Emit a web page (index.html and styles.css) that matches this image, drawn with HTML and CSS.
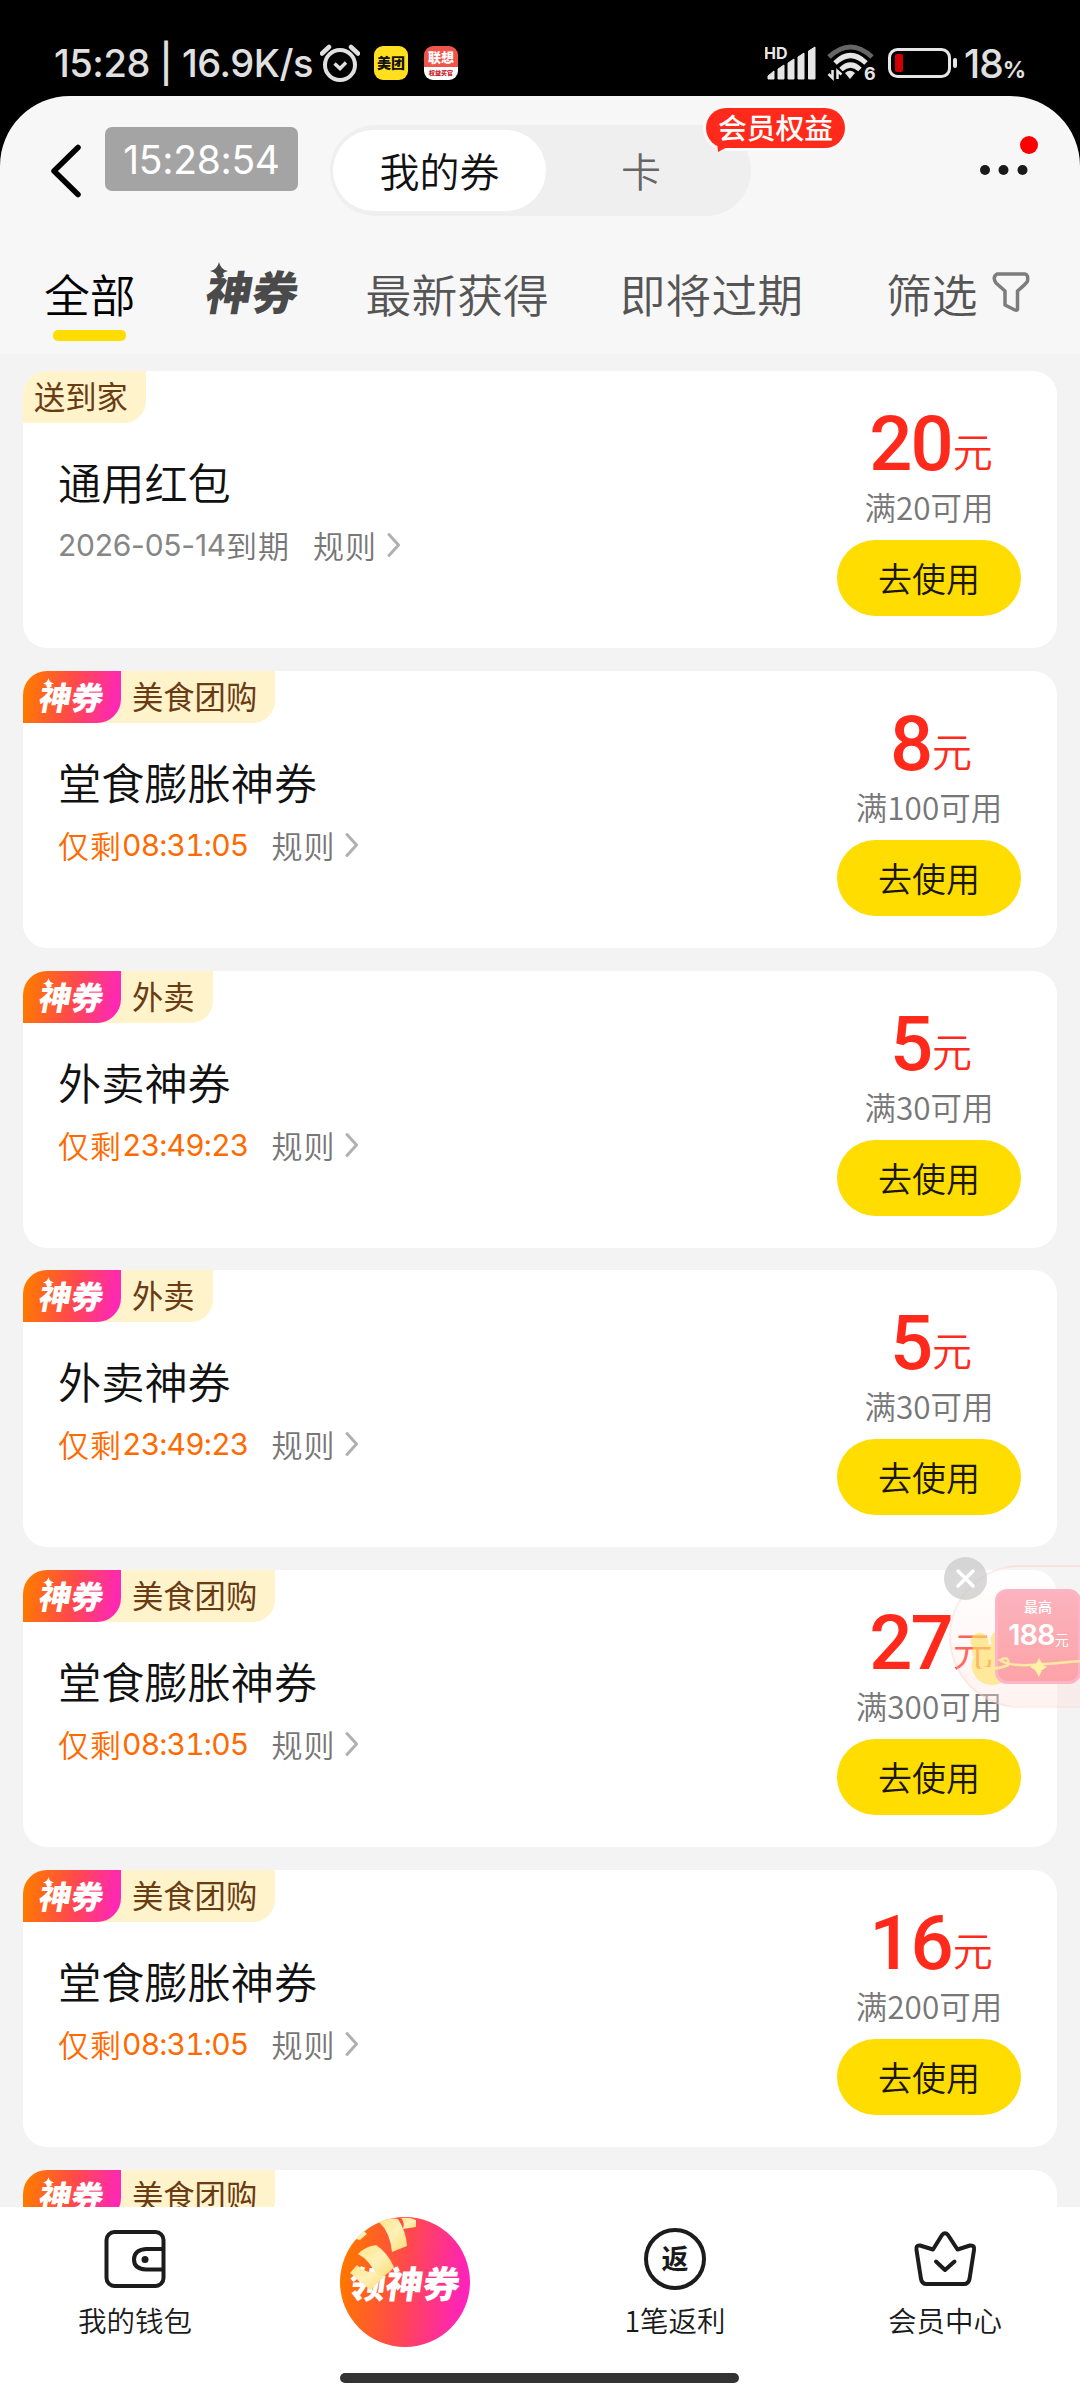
FILE: index.html
```html
<!DOCTYPE html>
<html lang="zh-CN">
<head>
<meta charset="utf-8">
<title>我的券</title>
<link rel="stylesheet" href="styles.css">
</head>
<body>
<svg width="0" height="0" class="defs">
  <symbol id="chev" viewBox="0 0 14 26"><path d="M2 2.500 L11.500 13 L2 23.500" fill="none" stroke="#b0b0b0" stroke-width="3" stroke-linecap="round" stroke-linejoin="round"/></symbol>
  <symbol id="spark" viewBox="0 0 18 18"><path d="M9 0 Q10.500 7.500 18 9 Q10.500 10.500 9 18 Q7.500 10.500 0 9 Q7.500 7.500 9 0Z" fill="currentColor"/></symbol>
</svg>
<div class="phone">
  <div class="status">
    <span class="clock">15:28 | 16.9K/s</span>
    <svg class="alarm" width="40" height="38" viewBox="0 0 40 38" fill="none" stroke="#e0e0e0"><circle cx="20" cy="21" r="15" stroke-width="4"/><path d="M14.500 19.500 L20 24.500 L26 18.500" stroke-width="3.500"/><path d="M2 9.500 L9 3 M38 9.500 L31 3" stroke-width="4.500" stroke-linecap="round"/></svg>
    <span class="app app-mt">美团</span>
    <span class="app app-lx"><b>联想</b><i>权益买官</i></span>
    <svg class="signal" width="52" height="36" viewBox="0 0 52 36" fill="#e6e6e6"><text x="-1" y="14" class="hd">HD</text><path d="M3 34 V31 L9 26 V34Z M13 34 V24 L19 20 V34Z M23 34 V18 L29 14 V34Z M33 34 V12 L39 8 V34Z M43.500 34 V6 L50 2 V34Z" stroke="#e6e6e6" stroke-width="1" stroke-linejoin="round"/></svg>
    <svg class="wifi" width="50" height="40" viewBox="0 0 50 40" fill="none" stroke="#e6e6e6" stroke-width="5"><path d="M2 14 Q23.500 -6 45 14" stroke="#666"/><path d="M8 20 Q23.500 5 39 20"/><path d="M14 26.500 Q23.500 17.500 33 26.500"/><path d="M18 30 Q23 25.500 28 30 L23 36Z" fill="#e6e6e6" stroke="none"/><path d="M5.500 27 V35 L1.500 31 M10.500 36 V28 L14.500 31.500" stroke-width="2.500"/><text x="37" y="37" class="six" stroke="none" fill="#e6e6e6">6</text></svg>
    <svg class="battery" width="70" height="32" viewBox="0 0 70 32"><rect x="1.500" y="2.500" width="60" height="27" rx="8" fill="none" stroke="#e6e6e6" stroke-width="3"/><rect x="7" y="7" width="8" height="18" rx="2" fill="#d00000"/><rect x="65" y="11" width="4" height="10" rx="2" fill="#e6e6e6"/></svg>
    <span class="pct">18<small>%</small></span>
  </div>

  <div class="sheet">
    <header class="top">
      <svg class="back" width="32" height="54" viewBox="0 0 32 54"><path d="M28 3.500 L4 27 L28 50.500" fill="none" stroke="#000" stroke-width="5.500" stroke-linecap="round" stroke-linejoin="round"/></svg>
      <div class="timer">15:28:54</div>
      <div class="seg">
        <div class="seg-on">我的券</div>
        <div class="seg-off">卡</div>
        <div class="badge">会员权益<svg class="tail" width="16" height="12" viewBox="0 0 16 12"><path d="M1 0 L2 11 L15 4 V0Z" fill="#ff2a1b"/></svg></div>
      </div>
      <svg class="more" width="58" height="44" viewBox="0 0 58 44"><circle cx="49" cy="9" r="9" fill="#f00"/><g fill="#1a1a1a"><circle cx="5" cy="34" r="5"/><circle cx="23.500" cy="34" r="5"/><circle cx="42.500" cy="34" r="5"/></g></svg>
    </header>
    <nav class="tabs">
      <span class="tab on">全部</span>
      <span class="tab-logo"><svg class="sp"><use href="#spark"/></svg><em>神券</em></span>
      <span class="tab t3">最新获得</span>
      <span class="tab t4">即将过期</span>
      <span class="tab t5">筛选</span>
      <svg class="funnel" width="38" height="42" viewBox="0 0 38 42"><path d="M5 3 H33 Q36.500 3.500 35.500 10 Q35 12 25.500 20 V38.500 Q25 40 22 38.500 L13 34 V20 L4 12 Q0 6 5 3Z" fill="none" stroke="#7d7d7d" stroke-width="3.500" stroke-linejoin="round"/></svg>
    </nav>
  </div>

  <main class="list">
    <article class="card">
      <div class="info">
        <div class="tags"><span class="tag solo">送到家</span></div>
        <h2>通用红包</h2>
        <p class="meta"><span class="date">2026-05-14</span><span class="cn">到期</span><span class="rule">规则</span><svg class="chev"><use href="#chev"/></svg></p>
      </div>
      <div class="buy"><div class="price"><b>20</b><span>元</span></div><div class="cond">满20可用</div><button>去使用</button></div>
    </article>
    <article class="card">
      <div class="info">
        <div class="tags"><span class="tag"><span class="logo"><svg class="sp"><use href="#spark"/></svg><em>神券</em></span>美食团购</span></div>
        <h2>堂食膨胀神券</h2>
        <p class="meta hot"><span class="cn">仅剩</span><span class="left">08:31:05</span><span class="rule">规则</span><svg class="chev"><use href="#chev"/></svg></p>
      </div>
      <div class="buy"><div class="price"><b>8</b><span>元</span></div><div class="cond">满100可用</div><button>去使用</button></div>
    </article>
    <article class="card">
      <div class="info">
        <div class="tags"><span class="tag"><span class="logo"><svg class="sp"><use href="#spark"/></svg><em>神券</em></span>外卖</span></div>
        <h2>外卖神券</h2>
        <p class="meta hot"><span class="cn">仅剩</span><span class="left">23:49:23</span><span class="rule">规则</span><svg class="chev"><use href="#chev"/></svg></p>
      </div>
      <div class="buy"><div class="price"><b>5</b><span>元</span></div><div class="cond">满30可用</div><button>去使用</button></div>
    </article>
    <article class="card">
      <div class="info">
        <div class="tags"><span class="tag"><span class="logo"><svg class="sp"><use href="#spark"/></svg><em>神券</em></span>外卖</span></div>
        <h2>外卖神券</h2>
        <p class="meta hot"><span class="cn">仅剩</span><span class="left">23:49:23</span><span class="rule">规则</span><svg class="chev"><use href="#chev"/></svg></p>
      </div>
      <div class="buy"><div class="price"><b>5</b><span>元</span></div><div class="cond">满30可用</div><button>去使用</button></div>
    </article>
    <article class="card">
      <div class="info">
        <div class="tags"><span class="tag"><span class="logo"><svg class="sp"><use href="#spark"/></svg><em>神券</em></span>美食团购</span></div>
        <h2>堂食膨胀神券</h2>
        <p class="meta hot"><span class="cn">仅剩</span><span class="left">08:31:05</span><span class="rule">规则</span><svg class="chev"><use href="#chev"/></svg></p>
      </div>
      <div class="buy"><div class="price"><b>27</b><span>元</span></div><div class="cond">满300可用</div><button>去使用</button></div>
    </article>
    <article class="card">
      <div class="info">
        <div class="tags"><span class="tag"><span class="logo"><svg class="sp"><use href="#spark"/></svg><em>神券</em></span>美食团购</span></div>
        <h2>堂食膨胀神券</h2>
        <p class="meta hot"><span class="cn">仅剩</span><span class="left">08:31:05</span><span class="rule">规则</span><svg class="chev"><use href="#chev"/></svg></p>
      </div>
      <div class="buy"><div class="price"><b>16</b><span>元</span></div><div class="cond">满200可用</div><button>去使用</button></div>
    </article>
    <article class="card">
      <div class="info">
        <div class="tags"><span class="tag"><span class="logo"><svg class="sp"><use href="#spark"/></svg><em>神券</em></span>美食团购</span></div>
      </div>
    </article>
  </main>

  <footer class="bar">
    <div class="item">
      <svg class="ico" width="64" height="64" viewBox="0 0 64 64" fill="none" stroke="#1c1c1c" stroke-width="4"><rect x="3.500" y="5" width="57" height="54" rx="8"/><path d="M60 22 H43 Q31 23 31 32.500 Q31 42 43 42.500 H60"/><circle cx="42" cy="32.500" r="3.500" fill="#1c1c1c" stroke="none"/></svg>
      <span>我的钱包</span>
    </div>
    <div class="item">
      <div class="ball"><em>领神券</em>
        <svg class="confetti" width="130" height="130" viewBox="0 0 130 130"><defs><linearGradient id="gold" x1="0" y1="0" x2="1" y2="1"><stop offset="0" stop-color="#ffe48a"/><stop offset=".5" stop-color="#fff1b8"/><stop offset="1" stop-color="#fbdb70"/></linearGradient></defs><g fill="url(#gold)"><path d="M39 5 Q50 0 58 2 Q66 14 67 29 L52 35 Q50 15 39 5Z"/><path d="M61 1 Q70 0 76 3 L76 10 L63 12 Q65 5 61 1Z"/><path d="M18 37 Q24 30 36 28 Q47 35 54 50 Q48 58 38 61 Q30 43 18 37Z"/><path d="M10 56 L17 48 Q25 56 36 56 L44 60 L30 73 Q21 64 10 56Z"/><path d="M16 22 L24 14 L27 17 L20 23Z"/></g></svg>
      </div>
    </div>
    <div class="item">
      <span class="ring">返</span>
      <span>1笔返利</span>
    </div>
    <div class="item">
      <svg class="ico" width="64" height="64" viewBox="0 0 64 64" fill="none" stroke="#1c1c1c" stroke-width="4" stroke-linejoin="round" stroke-linecap="round"><path d="M7 18.500 L20 22.500 L29 8 Q32 4.500 35 8 L44.500 22.500 L57 18.500 Q62 18 61 23 L56.500 52 Q55.500 57 51 57 H13.500 Q9 57 8 52 L3.500 23 Q2.500 18 7 18.500Z"/><path d="M23 34.500 L32 43 L41.500 34.500"/></svg>
      <span>会员中心</span>
    </div>
    <div class="home"></div>
  </footer>

  <aside class="promo">
    <div class="pill"></div>
    <svg class="bear" width="44" height="58" viewBox="0 0 44 58"><g fill="#ffe066" opacity=".65"><path d="M4 18 A9 9 0 1 1 19 15 Q21 14 23 14 A8 8 0 1 1 37 12 Q39 16 36 20 A20 20 0 1 1 5 26 Q2 22 4 18Z"/></g></svg>
    <div class="gift"><span class="g1">最高</span><span class="g2">188<small>元</small></span></div>
    <svg class="ribbon" width="100" height="30" viewBox="0 0 100 30"><path d="M0 16 Q15 20 28 14 Q30 4 20 9 Q28 15 50 14 T100 10" fill="none" stroke="#ffe9a0" stroke-width="2.500"/><path d="M59 7 L63 14 L67 16 L62 19 L59 26 L55 19 L50 16 L56 13Z" fill="#fff3a8"/></svg>
    <svg class="close" width="43" height="43" viewBox="0 0 43 43"><circle cx="21.500" cy="21.500" r="21.500" fill="#c8c8c8" opacity=".7"/><path d="M14 14 L29 29 M29 14 L14 29" stroke="#fff" stroke-width="3.500" stroke-linecap="round"/></svg>
  </aside>
</div>
</body>
</html>
```
FILE: styles.css
```css
* { box-sizing: border-box; margin: 0; padding: 0; }
body {
  width: 1080px;
  height: 2400px;
  overflow: hidden;
  background: #000;
  font-family: "Noto Sans CJK SC", sans-serif;
  font-weight: 350;
}
em, i { font-style: normal; }
.defs { position: absolute; }
.phone {
  position: relative;
  width: 1080px;
  height: 2400px;
  display: flex;
  flex-direction: column;
}

/* status bar */
.status {
  flex: none;
  height: 96px;
  display: flex;
  align-items: center;
  padding: 30px 0 0 54px;
  color: #e0e0e0;
  font-family: Inter, sans-serif;
}
.clock { flex: none; width: 266px; font-size: 38px; font-weight: 500; letter-spacing: -0.450px; white-space: nowrap; }
.alarm { flex: none; }
.app {
  flex: none;
  width: 34px;
  height: 34px;
  margin-left: 14px;
  border-radius: 9px;
  background: #ffdf1e;
  color: #111;
  font: 900 14px/33px "Noto Sans CJK SC", sans-serif;
  text-align: center;
  overflow: hidden;
}
.app-lx { margin-left: 16px; background: linear-gradient(#f0544a 62%, #fff 62%); display: flex; flex-direction: column; }
.app-lx b { color: #fff; font-size: 13px; line-height: 21px; font-weight: 900; }
.app-lx i { color: #c8202a; font-size: 6px; line-height: 11px; }
.signal { flex: none; margin-left: 307px; }
.hd { font: 700 16px Inter, sans-serif; }
.six { font: 700 18px Inter, sans-serif; }
.wifi { flex: none; margin-left: 10px; }
.battery { flex: none; margin-left: 11px; }
.pct { margin-left: 6px; font-size: 39px; font-weight: 500; letter-spacing: -1px; white-space: nowrap; }
.pct small { font-size: 23px; font-weight: 700; }

/* header */
.sheet {
  flex: none;
  height: 258px;
  background: #f7f7f7;
  border-radius: 70px 70px 0 0;
}
.top {
  height: 124px;
  display: flex;
  align-items: flex-start;
  padding: 29px 0 0 50px;
}
.back { flex: none; margin-top: 19px; }
.timer {
  flex: none;
  width: 193px;
  height: 64px;
  margin: 2px 0 0 23px;
  border-radius: 7px;
  background: #a4a4a4;
  color: #fff;
  font: 400 39px/66px Inter, sans-serif;
  letter-spacing: -0.300px;
  text-align: center;
}
.seg {
  position: relative;
  flex: none;
  width: 421px;
  height: 91px;
  margin-left: 32px;
  padding: 5px 3px;
  border-radius: 46px;
  background: #efefef;
  display: flex;
  font-size: 40px;
  line-height: 81px;
  text-align: center;
}
.seg-on { width: 213px; height: 81px; border-radius: 41px; background: #fff; color: #111; }
.seg-off { width: 190px; color: #666; }
.badge {
  position: absolute;
  left: 376px;
  top: -17px;
  width: 139px;
  height: 40px;
  border-radius: 20px;
  background: #ff2a1b;
  box-shadow: 0 0 0 3px #fafafa;
  color: #fff;
  font-size: 28.800px;
  font-weight: 500;
  line-height: 38px;
}
.tail { position: absolute; left: 10px; top: 33px; }
.more { flex: none; margin: 11px 0 0 229px; }
.tabs {
  height: 134px;
  display: flex;
  align-items: flex-start;
  padding: 42px 0 0 44px;
  font-size: 45.800px;
  line-height: 62px;
  color: #555;
}
.tab { white-space: nowrap; }
.tab.on { position: relative; color: #000; }
.tab.on::after {
  content: "";
  position: absolute;
  left: 9px;
  top: 68px;
  width: 73px;
  height: 11px;
  border-radius: 5px;
  background: #fd0;
}
.tab-logo { position: relative; margin-left: 71px; width: 92px; color: #4a4a4a; }
.tab-logo em { display: block; font-weight: 900; font-size: 46px; line-height: 57px; transform: skewX(-10deg); white-space: nowrap; }
.sp { position: absolute; left: 3px; top: 0; width: 18px; height: 18px; }
.t3 { margin-left: 67px; }
.t4 { margin-left: 71px; }
.t5 { margin-left: 83px; }
.funnel { flex: none; margin: 9px 0 0 14px; }

/* coupon list */
.list {
  flex: none;
  height: 1853px;
  overflow: hidden;
  padding: 17px 23px 0;
  background: #f3f3f3;
  display: flex;
  flex-direction: column;
  gap: 22.800px;
}
.card {
  flex: none;
  height: 277px;
  display: flex;
  justify-content: space-between;
  border-radius: 24px;
  background: #fff;
}
.tags { display: flex; height: 52px; }
.tag {
  display: flex;
  padding-right: 18px;
  border-radius: 24px 0 22px 0;
  background: #fff3cc;
  color: #6a3c14;
  font-size: 31.300px;
  font-weight: 400;
  line-height: 49px;
}
.tag.solo { padding-left: 11px; }
.logo {
  position: relative;
  width: 98px;
  margin-right: 11px;
  border-radius: 24px 0 24px 0;
  background: linear-gradient(100deg, #ff7a00 5%, #ff4a4a 50%, #ff28b4 92%);
  color: #fff;
}
.logo em { display: block; margin-left: 17px; font-size: 32px; line-height: 50px; font-weight: 900; transform: skewX(-10deg); white-space: nowrap; }
.logo .sp { left: 20px; top: 7px; width: 11px; height: 11px; }
h2 {
  margin: 26px 0 0 35px;
  font-size: 43.200px;
  font-weight: 350;
  line-height: 64px;
  color: #111;
}
.meta {
  display: flex;
  align-items: center;
  height: 46px;
  margin: 9px 0 0 35px;
  font-size: 31px;
  line-height: 46px;
  color: #777;
}
.cn { letter-spacing: 1px; }
.date, .left { font-family: Inter, sans-serif; font-size: 30px; font-weight: 400; }
.date { color: #868686; letter-spacing: -0.250px; }
.left { font-variant-numeric: tabular-nums; letter-spacing: -0.800px; }
.hot .cn, .left { color: #ff6a00; }
.rule { margin-left: 23px; letter-spacing: 1px; }
.chev { width: 14px; height: 26px; margin-left: 10px; }

.buy { width: 184px; margin-right: 36px; text-align: center; white-space: nowrap; display: flex; flex-direction: column; align-items: center; }
.price { height: 113px; display: flex; align-items: baseline; color: #ff2a1b; padding: 29px 0 0 4px; }
.price b { font: 500 76px/89px Roboto, sans-serif; letter-spacing: -2px; }
.price span { margin-left: 1px; font-size: 40px; line-height: 56px; position: relative; top: -3px; }
.cond { height: 56px; font-size: 31.500px; line-height: 44px; color: #777; }
button {
  width: 184px;
  height: 76px;
  border: 0;
  border-radius: 38px;
  background: #fd0;
  color: #1a1600;
  font: 350 34px/76px "Noto Sans CJK SC", sans-serif;
}

/* bottom bar */
.bar {
  position: relative;
  flex: none;
  height: 193px;
  background: #fff;
  display: grid;
  grid-template-columns: repeat(4, 270px);
}
.item { display: flex; flex-direction: column; align-items: center; padding-top: 20px; font-size: 28.500px; line-height: 42px; color: #1a1a1a; }
.ico { margin-bottom: 8px; }
.ring {
  width: 62px;
  height: 62px;
  margin: 1px 0 9px;
  border: 4px solid #1c1c1c;
  border-radius: 50%;
  font-size: 27px;
  font-weight: 700;
  line-height: 52px;
  text-align: center;
}
.ball {
  position: relative;
  width: 130px;
  height: 130px;
  margin-top: -10px;
  border-radius: 50%;
  background: linear-gradient(98deg, #ff7500 8%, #ff4a4a 48%, #ff22bb 92%);
  color: #fff;
}
.ball em { display: block; width: 130px; font-size: 37px; font-weight: 900; line-height: 130px; text-align: center; transform: skewX(-8deg); }
.confetti { position: absolute; left: 0; top: 0; }
.home { position: absolute; left: 340px; top: 166px; width: 399px; height: 10px; border-radius: 5px; background: #333; }

/* floating promotion over the list */
.promo { position: absolute; left: 943px; top: 1556px; width: 137px; height: 156px; overflow: hidden; }
.promo > * { position: absolute; }
.pill {
  left: 6px;
  top: 9px;
  width: 200px;
  height: 143px;
  border: 2px solid rgba(255, 200, 190, .3);
  border-radius: 72px;
  background: linear-gradient(rgba(255, 255, 255, .2), rgba(255, 225, 220, .4));
}
.bear { left: 26px; top: 74px; }
.gift {
  left: 52px;
  top: 33px;
  width: 86px;
  height: 95px;
  border-radius: 12px;
  border: 3px solid #fcb4c6;
  background: linear-gradient(#fbb3bd, #fca3a8);
  color: #fff;
  display: flex;
  flex-direction: column;
  align-items: center;
}
.g1 { margin-top: 5px; font-size: 14px; line-height: 18px; font-weight: 500; }
.g2 { margin-top: 3px; font: 600 29px/34px Inter, sans-serif; letter-spacing: -1px; white-space: nowrap; }
.g2 small { font: 400 14px "Noto Sans CJK SC", sans-serif; }
.ribbon { left: 37px; top: 95px; }
.close { left: 1px; top: 1px; }
```
